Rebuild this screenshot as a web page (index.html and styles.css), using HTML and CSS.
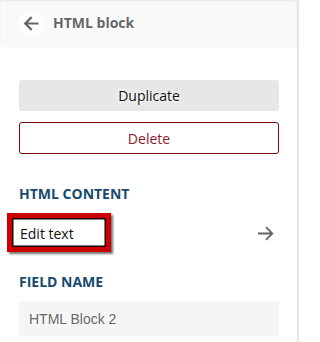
FILE: index.html
```html
<!DOCTYPE html>
<html>
<head>
<meta charset="utf-8">
<link rel="stylesheet" href="styles.css">
</head>
<body>
<div class="panel">
  <header class="header">
    <span class="back">
      <svg width="16" height="15" viewBox="0 0 16 15"><path d="M15.5 7.5H2.2M8.6 1.1L2.2 7.5l6.4 6.4" fill="none" stroke="#666" stroke-width="2.2"/></svg>
    </span>
    <span class="title">HTML block</span>
  </header>
  <div class="content">
    <button class="btn btn-dup">Duplicate</button>
    <button class="btn btn-del">Delete</button>
    <div class="label label-first">HTML CONTENT</div>
    <div class="edit-row">
      <span class="edit-text">Edit text</span>
      <svg class="go" width="17" height="15" viewBox="0 0 17 15"><path d="M1 7.5h14.5M9 1.2l6.3 6.3L9 13.8" fill="none" stroke="#666" stroke-width="1.8"/></svg>
      <span class="highlight"></span>
    </div>
    <div class="label label-second">FIELD NAME</div>
    <div class="input">HTML Block 2</div>
  </div>
</div>
</body>
</html>
```
FILE: styles.css
```css
html, body {
  margin: 0;
  padding: 0;
  background: #fff;
}
body {
  width: 301px;
  height: 342px;
  overflow: hidden;
  font-family: "Open Sans", "Noto Sans", sans-serif;
}
.panel {
  width: 297px;
  height: 342px;
  border-right: 2px solid #e6e6e6;
  background: #fff;
}
.header {
  height: 47px;
  background: #f9f9f9;
  box-shadow: inset 0 1px 2px rgba(0,0,0,0.07);
  display: flex;
  align-items: center;
  padding-left: 18px;
  box-sizing: border-box;
}
.back {
  width: 25px;
  height: 25px;
  border-radius: 50%;
  background: #fdfdfd;
  display: flex;
  align-items: center;
  justify-content: center;
  margin-top: -1px;
  box-shadow: 0 0 3px #fff;
}
.title {
  margin-left: 10px;
  font-weight: 700;
  font-size: 14px;
  color: #666;
  line-height: 19px;
  margin-top: -2px;
  text-shadow: 0 0 3px #fff, 0 0 5px #fff, 0 0 6px #fff;
}
.content {
  padding: 0 18px 0 19px;
  display: flex;
  flex-direction: column;
}
.btn {
  width: 260px;
  font-family: "Open Sans", "Noto Sans", sans-serif;
  font-size: 14px;
  line-height: 19px;
  border-radius: 3px;
  padding: 0;
  cursor: pointer;
}
.btn-dup {
  margin-top: 33px;
  height: 31px;
  background: #e7e7e7;
  border: none;
  color: #111;
  text-shadow: 0 0 3px #fff, 0 0 5px #fff;
}
.btn-del {
  margin-top: 11px;
  height: 32px;
  background: #fff;
  border: 1px solid #7a0a0a;
  color: #8b1a2a;
}
.label {
  font-weight: 700;
  font-size: 14px;
  line-height: 19px;
  color: #174a6e;
}
.label-first {
  margin-top: 30px;
}
.label-second {
  margin-top: 20px;
}
.edit-row {
  position: relative;
  margin-top: 11px;
  height: 38px;
  display: flex;
  align-items: center;
  justify-content: space-between;
  padding: 0 5px 0 1px;
}
.edit-text {
  font-size: 14px;
  line-height: 19px;
  color: #111;
  position: relative;
  z-index: 2;
}
.go {
  display: block;
}
.highlight {
  position: absolute;
  left: -12px;
  top: -1px;
  width: 104px;
  height: 39px;
  box-sizing: border-box;
  border: 5px solid #cc0000;
  box-shadow: inset 0 0 0 1.5px #1a0000, 2px 2px 2px rgba(0,0,0,0.55);
  z-index: 1;
}
.input {
  margin-top: 10px;
  width: 260px;
  height: 35px;
  box-sizing: border-box;
  background: #f5f5f5;
  padding-left: 10px;
  display: flex;
  align-items: center;
  font-family: "Liberation Sans", Arial, sans-serif;
  font-size: 14px;
  color: #666;
  text-shadow: 0 0 3px #fff, 0 0 5px #fff;
}
```
